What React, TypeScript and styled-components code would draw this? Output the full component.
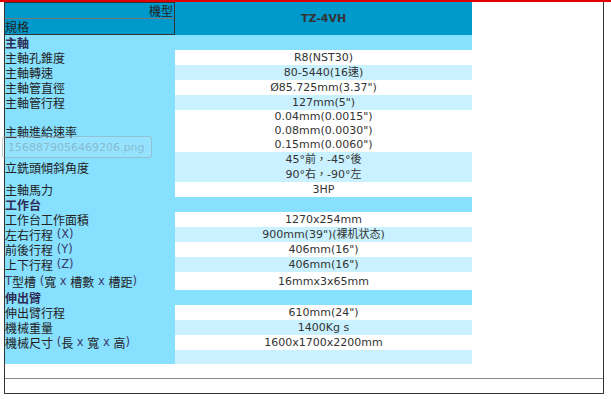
import React from "react";
import styled, { createGlobalStyle } from "styled-components";

const Global = createGlobalStyle`
  html, body { margin: 0; padding: 0; background: #ffffff; }
  body { font-family: "DejaVu Sans", "Noto Sans CJK TC", sans-serif; overflow: hidden; }
`;

const TopBar = styled.div`
  height: 2px;
  width: 611px;
  background: #e00000;
`;

const Frame = styled.div`
  position: relative;
  box-sizing: border-box;
  margin-left: 4px;
  width: 600px;
  height: 392px;
  border-left: 1px solid #333333;
  border-right: 1px solid #333333;
  border-bottom: 1px solid #333333;
  display: flex;
  flex-direction: column;
`;

const Spec = styled.div`
  width: 467px;
  display: flex;
  flex-direction: column;
`;

const HeaderRow = styled.div`
  display: flex;
  height: 33px;
  background: #0099cc;
`;

const CornerCell = styled.div`
  box-sizing: border-box;
  width: 170px;
  height: 33px;
  border-top: 1px solid #333333;
  border-right: 1px solid #333333;
  border-bottom: 1px solid #333333;
  display: flex;
  flex-direction: column;
  font-family: "Noto Sans CJK TC", sans-serif;
  font-size: 12px;
  color: #222222;
`;

const CornerTop = styled.div`
  height: 15px;
  line-height: 15px;
  text-align: right;
  padding-right: 1px;
  border-bottom: 1px solid #777777;
  overflow: hidden;
`;

const CornerBottom = styled.div`
  flex: 1;
  line-height: 15px;
  text-align: left;
  overflow: hidden;
`;

const ModelCell = styled.div`
  flex: 1;
  display: flex;
  align-items: center;
  justify-content: center;
  font-family: "DejaVu Sans", sans-serif;
  font-weight: bold;
  font-size: 11px;
  color: #333333;
`;

const Row = styled.div<{ $h: number }>`
  display: flex;
  height: ${(p) => p.$h}px;
`;

const Label = styled.div<{ $bold?: boolean }>`
  width: 170px;
  flex: none;
  background: #88e0ff;
  display: flex;
  align-items: center;
  font-family: "Noto Sans CJK TC", sans-serif;
  font-size: 12px;
  line-height: 15px;
  font-weight: ${(p) => (p.$bold ? 700 : 400)};
  color: ${(p) => (p.$bold ? "#2c2c55" : "#222222")};
  white-space: pre;
  overflow: hidden;
`;

const Latin = styled.span`
  font-family: "DejaVu Sans", sans-serif;
  font-size: 11.5px;
  color: #3a3a6a;
  white-space: pre;
`;

const Value = styled.div<{ $tone: "white" | "light" | "section"; $lh: number }>`
  flex: 1;
  background: ${(p) =>
    p.$tone === "white" ? "#ffffff" : p.$tone === "light" ? "#c9f1ff" : "#88e0ff"};
  display: flex;
  flex-direction: column;
  align-items: center;
  justify-content: center;
  font-family: "DejaVu Sans", "Noto Sans CJK TC", sans-serif;
  font-size: 11px;
  line-height: ${(p) => p.$lh}px;
  color: #333333;
  white-space: nowrap;
`;

const Spacer = styled.div<{ $h: number }>`
  height: ${(p) => p.$h}px;
`;

const Rule = styled.div`
  height: 1px;
  background: #888888;
`;

const Tip = styled.div`
  position: absolute;
  left: -3px;
  top: 134px;
  box-sizing: border-box;
  width: 150px;
  height: 22px;
  border: 1px solid rgba(140, 150, 160, 0.45);
  border-radius: 3px;
  background: rgba(255, 255, 255, 0.12);
  padding-left: 5px;
  display: flex;
  align-items: center;
  font-family: "DejaVu Sans", sans-serif;
  font-size: 11px;
  color: rgba(120, 150, 165, 0.55);
`;

type Item =
  | { kind: "section"; label: string }
  | { kind: "row"; label: React.ReactNode; values: string[]; h: number; lh?: number; tone: "white" | "light" };

const items: Item[] = [
  { kind: "section", label: "主軸" },
  { kind: "row", label: "主軸孔錐度", values: ["R8(NST30)"], h: 15, tone: "white" },
  { kind: "row", label: "主軸轉速", values: ["80-5440(16速)"], h: 15, tone: "light" },
  { kind: "row", label: "主軸管直徑", values: ["Ø85.725mm(3.37\")"], h: 15, tone: "white" },
  { kind: "row", label: "主軸管行程", values: ["127mm(5\")"], h: 15, tone: "light" },
  {
    kind: "row",
    label: "主軸進給速率",
    values: ["0.04mm(0.0015\")", "0.08mm(0.0030\")", "0.15mm(0.0060\")"],
    h: 42,
    lh: 14,
    tone: "white",
  },
  { kind: "row", label: "立銑頭傾斜角度", values: ["45°前，-45°後", "90°右，-90°左"], h: 30, tone: "light" },
  { kind: "row", label: "主軸馬力", values: ["3HP"], h: 15, tone: "white" },
  { kind: "section", label: "工作台" },
  { kind: "row", label: "工作台工作面積", values: ["1270x254mm"], h: 15, tone: "white" },
  { kind: "row", label: <>左右行程<Latin>{" (X)"}</Latin></>, values: ["900mm(39\")(裸机状态)"], h: 15, tone: "light" },
  { kind: "row", label: <>前後行程<Latin>{" (Y)"}</Latin></>, values: ["406mm(16\")"], h: 15, tone: "white" },
  { kind: "row", label: <>上下行程<Latin>{" (Z)"}</Latin></>, values: ["406mm(16\")"], h: 15, tone: "light" },
  {
    kind: "row",
    label: (
      <>
        <Latin>T</Latin>型槽<Latin>{" ("}</Latin>寬<Latin>{" x "}</Latin>槽數<Latin>{" x "}</Latin>槽距<Latin>)</Latin>
      </>
    ),
    values: ["16mmx3x65mm"],
    h: 18,
    tone: "white",
  },
  { kind: "section", label: "伸出臂" },
  { kind: "row", label: "伸出臂行程", values: ["610mm(24\")"], h: 15, tone: "white" },
  { kind: "row", label: "機械重量", values: ["1400Kg s"], h: 15, tone: "light" },
  {
    kind: "row",
    label: (
      <>
        機械尺寸<Latin>{" ("}</Latin>長<Latin>{" x "}</Latin>寬<Latin>{" x "}</Latin>高<Latin>)</Latin>
      </>
    ),
    values: ["1600x1700x2200mm"],
    h: 15,
    tone: "white",
  },
  { kind: "row", label: "", values: [], h: 14, tone: "light" },
];

export default function App() {
  return (
    <>
      <Global />
      <TopBar />
      <Frame>
        <Spec>
          <HeaderRow>
            <CornerCell>
              <CornerTop>機型</CornerTop>
              <CornerBottom>規格</CornerBottom>
            </CornerCell>
            <ModelCell>TZ-4VH</ModelCell>
          </HeaderRow>
          {items.map((it, i) =>
            it.kind === "section" ? (
              <Row key={i} $h={15}>
                <Label $bold>{it.label}</Label>
                <Value $tone="section" $lh={15} />
              </Row>
            ) : (
              <Row key={i} $h={it.h}>
                <Label>{it.label}</Label>
                <Value $tone={it.tone} $lh={it.lh ?? 15}>
                  {it.values.map((v, j) => (
                    <div key={j}>{v}</div>
                  ))}
                </Value>
              </Row>
            )
          )}
        </Spec>
        <Spacer $h={14} />
        <Rule />
        <Tip>1568879056469206.png</Tip>
      </Frame>
    </>
  );
}
